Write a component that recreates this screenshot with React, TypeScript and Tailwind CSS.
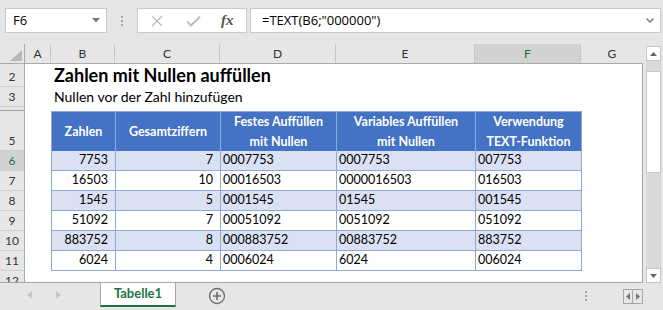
import { type ReactNode } from "react";

type DataRow = {
  zahl: number;
  ziffern: number;
  fest: string;
  variabel: string;
  text: string;
};

const rows: DataRow[] = [
  { zahl: 7753, ziffern: 7, fest: "0007753", variabel: "0007753", text: "007753" },
  { zahl: 16503, ziffern: 10, fest: "00016503", variabel: "0000016503", text: "016503" },
  { zahl: 1545, ziffern: 5, fest: "0001545", variabel: "01545", text: "001545" },
  { zahl: 51092, ziffern: 7, fest: "00051092", variabel: "0051092", text: "051092" },
  { zahl: 883752, ziffern: 8, fest: "000883752", variabel: "00883752", text: "883752" },
  { zahl: 6024, ziffern: 4, fest: "0006024", variabel: "6024", text: "006024" },
];

function RowHead({ label, active = false }: { label: string; active?: boolean }) {
  return (
    <div
      className={`flex w-[25px] shrink-0 items-end justify-center border-r border-b border-r-[#ababab] border-b-[#cfcfcf] text-[12px] leading-[19px] ${
        active ? "bg-[#d2d2d2] text-[#217346]" : "bg-[#e6e6e6] text-[#333]"
      }`}
    >
      {label}
    </div>
  );
}

function ColHead({ label, w, active = false }: { label: string; w: string; active?: boolean }) {
  return (
    <div
      className={`flex h-full shrink-0 items-center justify-center border-r border-[#c6c6c6] text-[12px] ${w} ${
        active ? "bg-[#d2d2d2] text-[#217346]" : "text-[#333]"
      }`}
    >
      {label}
    </div>
  );
}

function Cell({ w, children, right = false }: { w: string; children: ReactNode; right?: boolean }) {
  return (
    <div
      className={`flex h-full shrink-0 items-center border-r border-b border-[#8ea9db] ${w} ${
        right ? "justify-end pr-[7px]" : "pl-[2px]"
      }`}
    >
      {children}
    </div>
  );
}

function HeadCell({ w, children }: { w: string; children: ReactNode }) {
  return (
    <div
      className={`flex h-full shrink-0 items-center justify-center border-r border-t border-[#8ea9db] bg-[#4472c4] text-center font-bold leading-[20px] text-white ${w}`}
    >
      <div>{children}</div>
    </div>
  );
}

export default function App() {
  return (
    <div className="flex h-[310px] w-[663px] flex-col overflow-hidden bg-[#e6e6e6] font-['Lato',sans-serif] text-black">
      {/* formula bar */}
      <div className="flex h-[44px] shrink-0 items-start pt-[8px] font-['Open_Sans',sans-serif] text-[13px]">
        <div className="ml-[5px] flex h-[25px] w-[102px] items-center justify-between border border-[#c8c8c8] bg-white pl-[7px] pr-[6px]">
          <span>F6</span>
          <svg width="8" height="5" viewBox="0 0 8 5">
            <polygon points="0,0 8,0 4,4.5" fill="#777" />
          </svg>
        </div>
        <div className="flex h-[25px] w-[30px] flex-col items-center justify-center gap-[2px]">
          <span className="h-[2px] w-[2px] bg-[#a6a6a6]" />
          <span className="h-[2px] w-[2px] bg-[#a6a6a6]" />
          <span className="h-[2px] w-[2px] bg-[#a6a6a6]" />
        </div>
        <div className="flex h-[25px] w-[110px] items-center border border-[#c8c8c8] bg-white">
          <svg width="12" height="12" viewBox="0 0 12 12" className="ml-[13px]">
            <path d="M1 1 L11 11 M11 1 L1 11" stroke="#bdbdbd" strokeWidth="1.4" />
          </svg>
          <svg width="15" height="12" viewBox="0 0 15 12" className="ml-[23px]">
            <path d="M1 6.5 L5 10.5 L14 1.5" stroke="#bdbdbd" strokeWidth="2" fill="none" />
          </svg>
          <span className="ml-[20px] font-['Liberation_Serif',serif] text-[15px] font-bold italic text-[#555]">
            fx
          </span>
        </div>
        <div className="ml-[3px] flex h-[25px] w-[411px] items-center justify-between border border-[#c8c8c8] bg-white pl-[11px] pr-[6px]">
          <span>=TEXT(B6;"000000")</span>
          <svg width="8" height="5" viewBox="0 0 8 5">
            <path d="M0.5 0.5 L4 4 L7.5 0.5" stroke="#777" strokeWidth="1.4" fill="none" />
          </svg>
        </div>
      </div>

      <div className="flex h-[239px] shrink-0">
        {/* sheet */}
        <div className="flex w-[643px] shrink-0 flex-col">
          {/* column headers */}
          <div className="flex h-[20px] shrink-0 border-b border-[#ababab]">
            <div className="relative h-full w-[25px] shrink-0 border-r border-[#ababab]">
              <svg width="24" height="19" viewBox="0 0 24 19" className="absolute left-0 top-0">
                <polygon points="22,6 22,17 10,17" fill="#b8b8b8" />
              </svg>
            </div>
            <ColHead label="A" w="w-[26px]" />
            <ColHead label="B" w="w-[64px]" />
            <ColHead label="C" w="w-[105px]" />
            <ColHead label="D" w="w-[116px]" />
            <ColHead label="E" w="w-[139px]" />
            <ColHead label="F" w="w-[106px]" active />
            <div className="flex h-full flex-1 items-center justify-center text-[12px] text-[#333]">G</div>
          </div>

          {/* body */}
          <div className="h-[219px] shrink-0 overflow-hidden border-r border-b border-[#a6a6a6] bg-white text-[12.5px]">
            <div className="flex h-[23px]">
              <RowHead label="2" />
              <div className="flex items-end pb-[1px] pl-[29px] text-[18px] font-bold leading-[22px]">
                Zahlen mit Nullen auffüllen
              </div>
            </div>
            <div className="flex h-[20px]">
              <RowHead label="3" />
              <div className="flex items-end pb-[1px] pl-[29px] text-[14px] leading-[18px]">
                Nullen vor der Zahl hinzufügen
              </div>
            </div>
            <div className="flex h-[4px]">
              <div className="w-[25px] shrink-0 border-r border-b border-r-[#ababab] border-b-[#a0a0a0] bg-[#e6e6e6]" />
            </div>
            <div className="flex h-[40px]">
              <RowHead label="5" />
              <div className="w-[26px] shrink-0" />
              <div className="flex h-full border-l border-[#8ea9db]">
                <HeadCell w="w-[64px]">Zahlen</HeadCell>
                <HeadCell w="w-[105px]">Gesamtziffern</HeadCell>
                <HeadCell w="w-[116px]">
                  Festes Auffüllen
                  <br />
                  mit Nullen
                </HeadCell>
                <HeadCell w="w-[139px]">
                  Variables Auffüllen
                  <br />
                  mit Nullen
                </HeadCell>
                <HeadCell w="w-[106px]">
                  Verwendung
                  <br />
                  TEXT-Funktion
                </HeadCell>
              </div>
            </div>
            {rows.map((r, i) => (
              <div key={r.zahl} className="flex h-[20px]">
                <RowHead label={String(i + 6)} active={i === 0} />
                <div className="w-[26px] shrink-0" />
                <div className={`flex h-full border-l border-[#8ea9db] ${i % 2 === 0 ? "bg-[#d9e1f2]" : "bg-white"}`}>
                  <Cell w="w-[64px]" right>
                    {r.zahl}
                  </Cell>
                  <Cell w="w-[105px]" right>
                    {r.ziffern}
                  </Cell>
                  <Cell w="w-[116px]">{r.fest}</Cell>
                  <Cell w="w-[139px]">{r.variabel}</Cell>
                  <Cell w="w-[106px]">{r.text}</Cell>
                </div>
              </div>
            ))}
            <div className="flex h-[20px]">
              <RowHead label="12" />
            </div>
          </div>
        </div>

        {/* vertical scrollbar */}
        <div className="flex w-[20px] shrink-0 flex-col pl-[3px] pr-[2px] pt-[2px]">
          <div className="flex h-[15px] shrink-0 items-center justify-center border border-[#c6c6c6] bg-white">
            <svg width="7" height="4" viewBox="0 0 7 4">
              <polygon points="0,4 7,4 3.5,0" fill="#666" />
            </svg>
          </div>
          <div className="flex-1 bg-[#dadada] pt-[10px]">
            <div className="h-[102px] border border-[#c6c6c6] bg-white" />
          </div>
          <div className="flex h-[15px] shrink-0 items-center justify-center border border-[#c6c6c6] bg-white">
            <svg width="7" height="4" viewBox="0 0 7 4">
              <polygon points="0,0 7,0 3.5,4" fill="#666" />
            </svg>
          </div>
        </div>
      </div>

      {/* sheet tabs */}
      <div className="flex h-[27px] shrink-0 items-start">
        <div className="flex h-[24px] w-[100px] shrink-0 items-center">
          <svg width="5" height="8" viewBox="0 0 5 8" className="ml-[27px]">
            <polygon points="5,0 5,8 0,4" fill="#c6c6c6" />
          </svg>
          <svg width="5" height="8" viewBox="0 0 5 8" className="ml-[24px]">
            <polygon points="0,0 0,8 5,4" fill="#c6c6c6" />
          </svg>
        </div>
        <div className="flex h-[24px] w-[76px] shrink-0 items-center justify-center border-x border-b-2 border-x-[#a6a6a6] border-b-[#217346] bg-white text-[13px] font-bold text-[#217346]">
          Tabelle1
        </div>
        <svg width="18" height="18" viewBox="0 0 18 18" className="ml-[32px] mt-[4px]">
          <circle cx="9" cy="9" r="7.5" stroke="#6d6d6d" strokeWidth="1.3" fill="none" />
          <path d="M9 5 V13 M5 9 H13" stroke="#6d6d6d" strokeWidth="1.6" />
        </svg>
        <div className="ml-auto mr-[36px] mt-[8px] flex flex-col gap-[2px]">
          <span className="h-[2px] w-[2px] bg-[#a6a6a6]" />
          <span className="h-[2px] w-[2px] bg-[#a6a6a6]" />
          <span className="h-[2px] w-[2px] bg-[#a6a6a6]" />
        </div>
        <div className="mr-[20px] mt-[6px] flex h-[15px] border border-[#a6a6a6] bg-[#e6e6e6]">
          <div className="flex w-[9px] items-center justify-center border-r border-[#a6a6a6]">
            <svg width="4" height="7" viewBox="0 0 4 7">
              <polygon points="4,0 4,7 0,3.5" fill="#777" />
            </svg>
          </div>
          <div className="flex w-[9px] items-center justify-center">
            <svg width="4" height="7" viewBox="0 0 4 7">
              <polygon points="0,0 0,7 4,3.5" fill="#777" />
            </svg>
          </div>
        </div>
      </div>
    </div>
  );
}
